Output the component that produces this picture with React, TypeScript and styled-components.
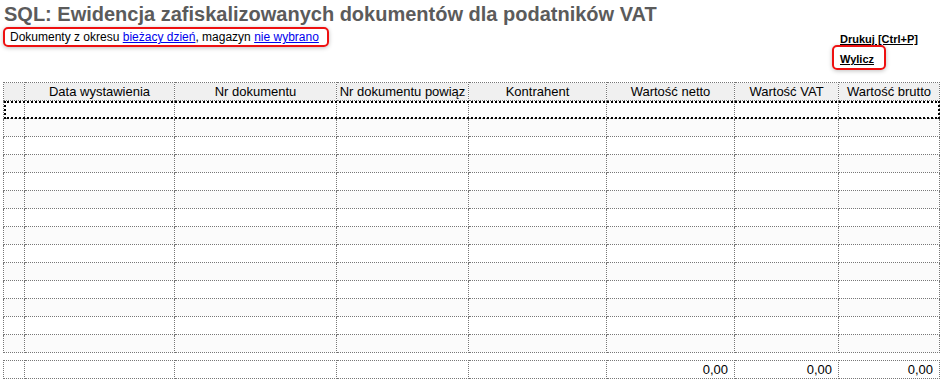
import React from "react";
import styled, { createGlobalStyle } from "styled-components";

const Global = createGlobalStyle`
  html, body { margin: 0; padding: 0; background: #fff; }
  body { font-family: Arial, "Liberation Sans", sans-serif; color: #000; }
`;

const Page = styled.div`
  padding: 3px 5px 0 3px;
  width: 936px;
`;

const Title = styled.h1`
  margin: 0;
  padding-left: 1px;
  font-size: 20px;
  line-height: 22px;
  font-weight: bold;
  color: #5b5b5b;
  white-space: nowrap;
`;

const TopBar = styled.div`
  display: flex;
  justify-content: space-between;
  align-items: flex-start;
  height: 57px;
`;

const Highlight = styled.div`
  border: 2px solid #ee1111;
  border-radius: 5px;
  box-shadow: 0 1px 4px rgba(0, 0, 0, 0.25);
`;

const Filter = styled(Highlight)`
  margin-top: 2px;
  padding: 1px 8px 1px 5px;
  font-size: 12px;
  line-height: 14px;
  white-space: nowrap;
`;

const Link = styled.a`
  color: #0000ee;
  text-decoration: underline;
  cursor: pointer;
`;

const Actions = styled.div`
  width: 99px;
  display: flex;
  flex-direction: column;
  align-items: flex-start;
  padding-top: 8px;
`;

const Action = styled.a`
  font-size: 11px;
  line-height: 12px;
  font-weight: bold;
  color: #000;
  text-decoration: underline;
  cursor: pointer;
  white-space: nowrap;
`;

const ActionBox = styled(Highlight)`
  margin: 0 0 0 -8px;
  padding: 2px 10px 1px 6px;
`;

const Grid = styled.table`
  border-collapse: collapse;
  table-layout: fixed;
  width: 936px;
  font-size: 13px;
`;

const Col = styled.col<{ $w: number }>`
  width: ${(p) => p.$w}px;
`;

const Th = styled.th`
  height: 17px;
  padding: 0 2px;
  background: #f0f0f0;
  border: 1px dotted #777;
  font-weight: normal;
  text-align: center;
  white-space: nowrap;
  overflow: hidden;
  line-height: 15px;
`;

const Tr = styled.tr<{ $alt?: boolean; $active?: boolean }>`
  background: ${(p) => (p.$alt ? "#fbfbfb" : "#fff")};
  ${(p) => (p.$active ? "outline: 2px dotted #000; outline-offset: -2px;" : "")}
`;

const Td = styled.td<{ $num?: boolean }>`
  height: 17px;
  padding: 0 6px 0 2px;
  border: 1px dotted #777;
  text-align: ${(p) => (p.$num ? "right" : "left")};
  white-space: nowrap;
  overflow: hidden;
  line-height: 15px;
`;

const Gap = styled.tr`
  height: 8px;
  td { border: none; padding: 0; }
`;

const widths = [21, 150, 162, 132, 138, 128, 104, 101];
const headers = [
  "",
  "Data wystawienia",
  "Nr dokumentu",
  "Nr dokumentu powiąz",
  "Kontrahent",
  "Wartość netto",
  "Wartość VAT",
  "Wartość brutto",
];
const totals = ["", "", "", "", "", "0,00", "0,00", "0,00"];

export default function App() {
  const rows = Array.from({ length: 14 }, (_, i) => i);
  return (
    <>
      <Global />
      <Page>
        <Title>SQL: Ewidencja zafiskalizowanych dokumentów dla podatników VAT</Title>
        <TopBar>
          <Filter>
            Dokumenty z okresu <Link>bieżacy dzień</Link>, magazyn <Link>nie wybrano</Link>
          </Filter>
          <Actions>
            <Action>Drukuj [Ctrl+P]</Action>
            <ActionBox>
              <Action>Wylicz</Action>
            </ActionBox>
          </Actions>
        </TopBar>
        <Grid>
          <colgroup>
            {widths.map((w, i) => (
              <Col key={i} $w={w} />
            ))}
          </colgroup>
          <thead>
            <tr>
              {headers.map((h, i) => (
                <Th key={i}>{h}</Th>
              ))}
            </tr>
          </thead>
          <tbody>
            {rows.map((r) => (
              <Tr key={r} $alt={r % 2 === 1} $active={r === 0}>
                {widths.map((_, i) => (
                  <Td key={i} />
                ))}
              </Tr>
            ))}
            <Gap>
              <td colSpan={8} />
            </Gap>
            <Tr>
              {totals.map((t, i) => (
                <Td key={i} $num={i >= 5}>
                  {t}
                </Td>
              ))}
            </Tr>
          </tbody>
        </Grid>
      </Page>
    </>
  );
}
